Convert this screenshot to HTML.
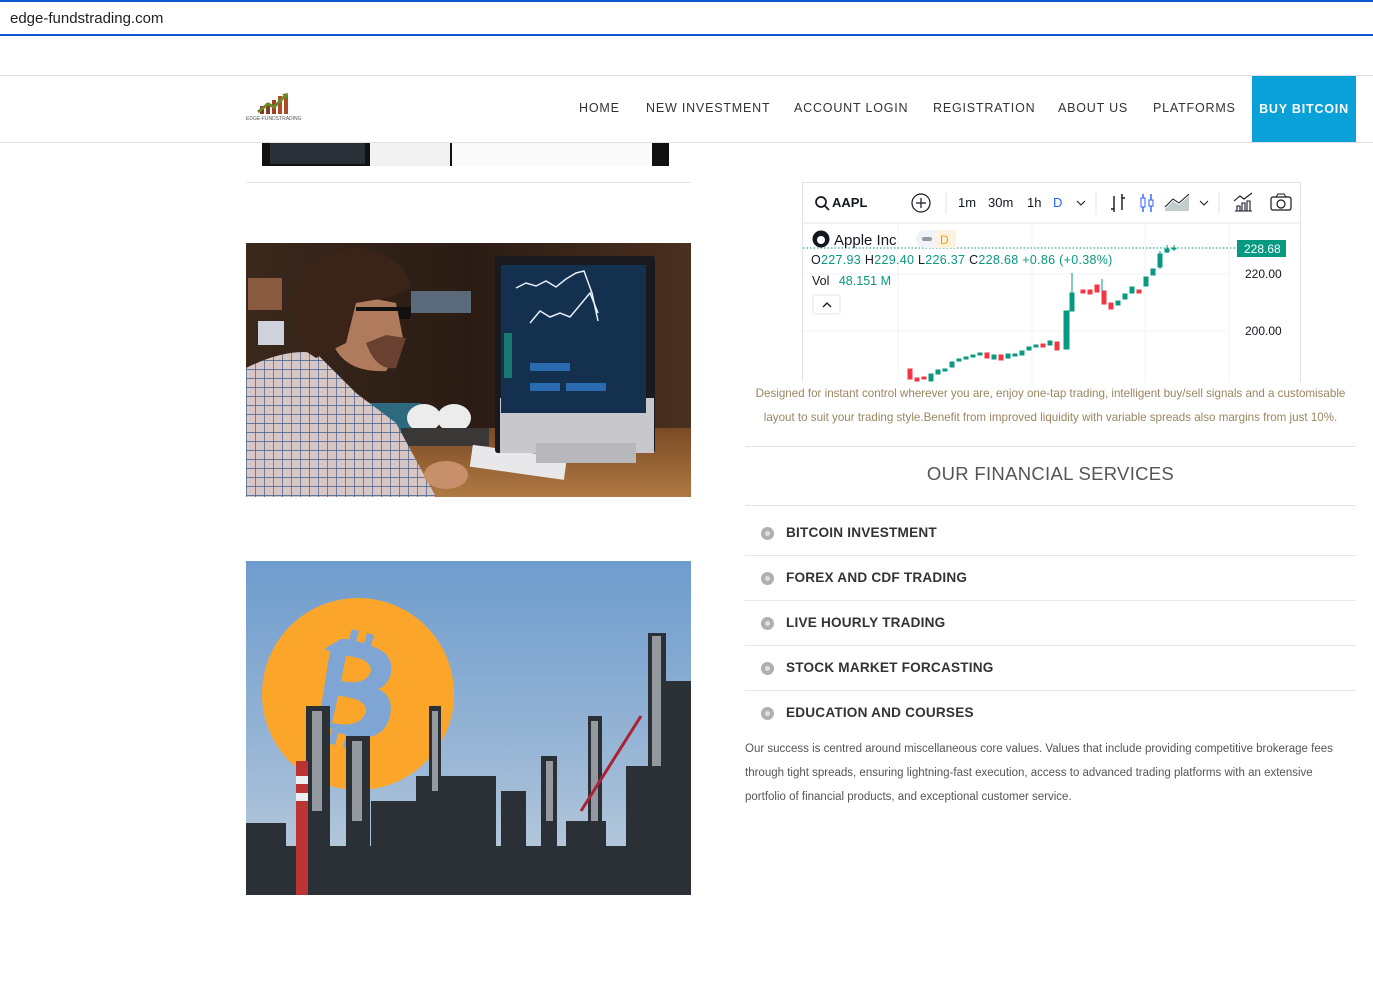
<!DOCTYPE html>
<html><head><meta charset="utf-8">
<style>
*{margin:0;padding:0;box-sizing:border-box}
body{width:1373px;height:983px;background:#fff;font-family:"Liberation Sans",sans-serif;position:relative;overflow:hidden}
.abs{position:absolute}
.url{left:0;top:0;width:1373px;height:36px;border-top:2px solid #0b57d0;border-bottom:2px solid #0b57d0;font-size:15px;color:#1f1f1f;padding:8px 0 0 10px}
.hdr{left:0;top:75px;width:1373px;height:68px;border-top:1px solid #e2e2e2;border-bottom:1px solid #e2e2e2;background:#fff;z-index:2}
.nav{font-size:12.5px;letter-spacing:.8px;color:#333;top:101px;z-index:3}
.buy{left:1252px;top:76px;width:104px;height:66px;background:#0aa0d8;color:#fff;font-weight:bold;font-size:12.5px;letter-spacing:.8px;line-height:66px;text-align:center;z-index:3}
.hr{height:1px;background:#e4e4e4}
.svc{left:745px;width:611px;height:45px;border-bottom:1px solid #e6e6e6}
.svc span.dot{position:absolute;left:16px;top:16px;width:13px;height:13px;border-radius:50%;background:#b0b0b0}
.svc span.dot:after{content:"";position:absolute;left:4px;top:4px;width:5px;height:5px;border-radius:50%;background:#e0e0e0}
.svc b{position:absolute;left:41px;top:14px;font-size:13.6px;color:#333;letter-spacing:.2px}
</style></head><body>
<div class="abs url">edge-fundstrading.com</div>

<div class="abs hdr"></div>
<svg class="abs" style="left:246px;top:92px;z-index:3" width="58" height="30" viewBox="0 0 58 30">
<rect x="14" y="14" width="4" height="8" fill="#8a3a20"/><rect x="20" y="11" width="4" height="11" fill="#8a3a20"/><rect x="26" y="8" width="4" height="14" fill="#a04024"/><rect x="32" y="4" width="4" height="18" fill="#b04a28"/><rect x="38" y="3" width="4" height="19" fill="#b04a28"/>
<path d="M12 20 L22 12 L28 15 L40 3" stroke="#6a8a2a" stroke-width="3" fill="none"/><path d="M36 2 L42 1 L41 7 Z" fill="#6a8a2a"/>
<text x="0" y="28" font-size="5" fill="#555" font-family="Liberation Sans">EDGE-FUNDSTRADING</text></svg>
<div class="abs nav" style="left:579px">HOME</div>
<div class="abs nav" style="left:646px">NEW INVESTMENT</div>
<div class="abs nav" style="left:794px">ACCOUNT LOGIN</div>
<div class="abs nav" style="left:933px">REGISTRATION</div>
<div class="abs nav" style="left:1058px">ABOUT US</div>
<div class="abs nav" style="left:1153px">PLATFORMS</div>
<div class="abs buy">BUY BITCOIN</div>

<div class="abs" style="left:262px;top:142px;width:407px;height:24px;background:#111">
<div class="abs" style="left:8px;top:0;width:95px;height:22px;background:#2a3038"></div>
<div class="abs" style="left:108px;top:0;width:80px;height:24px;background:#f2f2f2"></div>
<div class="abs" style="left:190px;top:0;width:200px;height:24px;background:#fafafa"></div>
</div>
<div class="abs hr" style="left:246px;top:182px;width:445px"></div>

<svg class="abs" style="left:246px;top:243px" width="445" height="254" viewBox="0 0 445 254">
<defs><linearGradient id="bg1" x1="0" y1="0" x2="1" y2="0"><stop offset="0" stop-color="#3a281c"/><stop offset=".5" stop-color="#2a1c14"/><stop offset="1" stop-color="#4a3020"/></linearGradient>
<linearGradient id="desk" x1="0" y1="0" x2="0" y2="1"><stop offset="0" stop-color="#7a4a24"/><stop offset="1" stop-color="#b07a44"/></linearGradient>
<pattern id="chk" width="9" height="9" patternUnits="userSpaceOnUse"><rect width="9" height="9" fill="#d8c6c4"/><path d="M0 0H9M0 0V9" stroke="#3f5f8f" stroke-width="1.4"/></pattern></defs>
<rect width="445" height="254" fill="url(#bg1)"/>
<rect x="2" y="35" width="34" height="32" fill="#8a5a40"/><rect x="12" y="78" width="26" height="24" fill="#cfd2dc"/>
<rect x="165" y="48" width="60" height="22" fill="#5a6a7a"/>
<rect x="150" y="185" width="295" height="69" fill="url(#desk)"/>
<rect x="120" y="160" width="55" height="30" fill="#2d6a80"/>
<ellipse cx="178" cy="175" rx="17" ry="14" fill="#ececec"/><ellipse cx="208" cy="175" rx="17" ry="14" fill="#ececec"/>
<rect x="155" y="185" width="88" height="18" fill="#3a3836"/>
<rect x="225" y="208" width="95" height="22" fill="#e8e8ea" transform="rotate(8 270 218)"/>
<rect x="249" y="13" width="160" height="197" rx="3" fill="#1a1a1e"/>
<rect x="254" y="155" width="154" height="55" fill="#c8c8cc"/>
<rect x="255" y="22" width="145" height="148" fill="#14304f"/>
<polyline points="270,45 280,40 290,43 300,38 310,44 320,36 330,30 338,28 346,50 352,78" fill="none" stroke="#e6eef8" stroke-width="1.5"/>
<polyline points="284,80 294,68 304,74 314,70 324,74 334,62 344,50 352,70" fill="none" stroke="#e6eef8" stroke-width="1.5"/>
<rect x="284" y="120" width="40" height="8" fill="#2a6ab0"/><rect x="320" y="140" width="40" height="8" fill="#2a6ab0"/><rect x="284" y="140" width="30" height="8" fill="#2a6ab0"/>
<rect x="258" y="90" width="8" height="45" fill="#1aaa8a" opacity=".6"/>
<rect x="290" y="200" width="100" height="20" fill="#b8b8bc"/>
<path d="M0 125 Q40 105 70 110 L110 150 L150 180 L190 254 L0 254Z" fill="url(#chk)"/>
<path d="M85 95 Q95 130 140 128 L158 100 L150 60 L100 50Z" fill="#b07a5c"/>
<path d="M120 100 Q130 128 150 125 L160 95 L140 92Z" fill="#6a4030"/>
<path d="M45 60 Q55 5 115 5 Q160 12 165 45 L140 55 L110 60 L100 100 L70 115 L55 105Z" fill="#3a2418"/>
<rect x="110" y="64" width="55" height="4" fill="#111"/><rect x="153" y="64" width="12" height="12" rx="3" fill="#111"/>
<ellipse cx="200" cy="232" rx="22" ry="14" fill="#c8906a"/>
</svg>

<svg class="abs" style="left:246px;top:561px" width="445" height="334" viewBox="0 0 445 334">
<defs><linearGradient id="sky" x1="0" y1="0" x2="0" y2="1"><stop offset="0" stop-color="#6e9ccd"/><stop offset=".6" stop-color="#9ab7d6"/><stop offset="1" stop-color="#c0cfdc"/></linearGradient></defs>
<rect width="445" height="334" fill="url(#sky)"/>
<circle cx="112" cy="133" r="96" fill="#fba62a"/>
<path d="M95 78 L103 78 L106 68 L113 70 L110 80 L118 82 L121 72 L128 74 L125 85 Q148 92 145 112 Q142 124 132 128 Q148 135 144 155 Q138 180 108 176 L104 188 L97 186 L100 174 L92 172 L89 184 L82 182 L86 168 L72 165 L84 90 L78 88Z" fill="#7fa5d4"/>
<path d="M100 95 L95 120 Q120 125 125 110 Q125 97 100 95Z M92 135 L86 162 Q115 168 120 150 Q120 137 92 135Z" fill="#fba62a"/>
<g fill="#2a3036">
<rect x="0" y="285" width="445" height="49"/>
<rect x="60" y="145" width="24" height="190"/><rect x="100" y="175" width="24" height="160"/>
<rect x="50" y="200" width="12" height="134" fill="#b33"/><rect x="50" y="215" width="12" height="8" fill="#eee"/><rect x="50" y="232" width="12" height="8" fill="#eee"/>
<rect x="183" y="145" width="12" height="190"/><rect x="170" y="215" width="80" height="120"/>
<rect x="255" y="230" width="25" height="105"/><rect x="295" y="195" width="16" height="140"/>
<rect x="342" y="155" width="14" height="180"/><rect x="380" y="205" width="25" height="130"/>
<rect x="402" y="72" width="18" height="262"/><rect x="418" y="120" width="27" height="214"/>
<rect x="0" y="262" width="40" height="72"/><rect x="125" y="240" width="45" height="94"/><rect x="320" y="260" width="40" height="74"/>
</g>
<g fill="#aeb4ba" opacity=".8"><rect x="66" y="150" width="10" height="100"/><rect x="106" y="180" width="10" height="80"/><rect x="186" y="150" width="6" height="80"/><rect x="345" y="160" width="7" height="100"/><rect x="406" y="75" width="9" height="130"/><rect x="300" y="200" width="7" height="60"/></g>
<path d="M335 250 L395 155" stroke="#a23" stroke-width="3"/>
</svg>

<div class="abs" style="left:802px;top:182px;width:499px;height:200px;border:1px solid #e0e3eb;border-bottom:none;overflow:hidden">
<svg width="499" height="200" viewBox="802 182 499 200" style="display:block">
<line x1="802" y1="222" x2="1301" y2="222" stroke="#e0e3eb"/>
<line x1="897" y1="222" x2="897" y2="382" stroke="#f0f3fa"/><line x1="1031" y1="222" x2="1031" y2="382" stroke="#f0f3fa"/><line x1="1144" y1="222" x2="1144" y2="382" stroke="#f0f3fa"/><line x1="1228" y1="222" x2="1228" y2="382" stroke="#f0f3fa"/>
<line x1="802" y1="273" x2="1228" y2="273" stroke="#f0f3fa"/><line x1="802" y1="330" x2="1228" y2="330" stroke="#f0f3fa"/>
<line x1="802" y1="247" x2="1235" y2="247" stroke="#089981" stroke-dasharray="1.5 2"/>
<g font-family="Liberation Sans" font-size="13">
<circle cx="820" cy="201" r="5" fill="none" stroke="#131722" stroke-width="1.7"/><line x1="824" y1="205" x2="828" y2="209" stroke="#131722" stroke-width="1.7"/>
<text x="831" y="206" font-weight="bold" fill="#131722">AAPL</text>
<circle cx="920" cy="202" r="9" fill="none" stroke="#131722" stroke-width="1.2"/><path d="M915 202H925M920 197V207" stroke="#131722" stroke-width="1.2"/>
<line x1="945" y1="191" x2="945" y2="213" stroke="#e0e3eb"/>
<text x="957" y="206" fill="#131722">1m</text><text x="987" y="206" fill="#131722">30m</text><text x="1026" y="206" fill="#131722">1h</text><text x="1052" y="206" fill="#2962ff">D</text>
<path d="M1076 200l4 4 4-4" fill="none" stroke="#131722"/>
<line x1="1095" y1="191" x2="1095" y2="213" stroke="#e0e3eb"/>
<path d="M1113 195v16M1110 208h3M1121 193v16M1121 197h3" stroke="#131722" stroke-width="1.4" fill="none"/>
<path d="M1142 193v18M1150 193v18" stroke="#2962ff" stroke-width="1.4"/><rect x="1140" y="197" width="4" height="9" fill="#fff" stroke="#2962ff"/><rect x="1148" y="199" width="4" height="6" fill="#fff" stroke="#2962ff"/>
<path d="M1164 208 L1172 200 L1178 204 L1188 195 V210 H1164Z" fill="#9aa" opacity=".6"/><path d="M1164 206 L1172 198 L1178 202 L1188 193" stroke="#131722" fill="none"/>
<path d="M1199 200l4 4 4-4" fill="none" stroke="#131722"/>
<line x1="1218" y1="191" x2="1218" y2="213" stroke="#e0e3eb"/>
<path d="M1234 210h17M1236 210v-5h3v5M1241 210v-8h3v8M1246 210v-10h3v10M1233 200l6-5 4 3 8-6" stroke="#131722" fill="none" stroke-width="1.1"/>
<rect x="1270" y="196" width="20" height="13" rx="2" fill="none" stroke="#131722" stroke-width="1.2"/><circle cx="1280" cy="203" r="4" fill="none" stroke="#131722" stroke-width="1.2"/><path d="M1275 196l2-3h6l2 3" fill="none" stroke="#131722"/>
<circle cx="820" cy="238" r="8.5" fill="#131722"/><circle cx="820" cy="239" r="4" fill="#fff"/>
<text x="833" y="244" font-size="15" fill="#131722">Apple Inc</text>
<rect x="915" y="229" width="40" height="18" rx="9" fill="#f0f3fa"/><rect x="935" y="229" width="20" height="18" fill="#fff3e0"/><rect x="921" y="236" width="10" height="4" rx="2" fill="#9598a1"/><text x="939" y="243" fill="#ff9800" font-size="12">D</text>
<text x="810" y="263" font-size="12.5" fill="#131722" letter-spacing=".3">O<tspan fill="#089981">227.93</tspan> H<tspan fill="#089981">229.40</tspan> L<tspan fill="#089981">226.37</tspan> C<tspan fill="#089981">228.68</tspan> <tspan fill="#089981">+0.86 (+0.38%)</tspan></text>
<text x="811" y="284" font-size="12.5" fill="#131722">Vol <tspan dx="6" fill="#089981">48.151 M</tspan></text>
<rect x="812" y="294" width="27" height="19" rx="2" fill="#fff" stroke="#e0e3eb"/><path d="M822 306l4-4 4 4" fill="none" stroke="#131722" stroke-width="1.3"/>
<rect x="1236" y="239" width="49" height="17" fill="#089981"/><text x="1243" y="252" fill="#fff" font-size="12">228.68</text>
<text x="1244" y="277" fill="#131722" font-size="12">220.00</text><text x="1244" y="334" fill="#131722" font-size="12">200.00</text>
</g>
<g>
<g fill="#f23645" stroke="#f23645"><rect x="907" y="368" width="4" height="10"/><rect x="914" y="377" width="4" height="3"/><rect x="921" y="376" width="4" height="2"/><rect x="984" y="352" width="4" height="5"/><rect x="998" y="354" width="4" height="5"/><rect x="1040" y="343" width="4" height="3"/><rect x="1054" y="341" width="4" height="8"/><rect x="1080" y="289" width="4" height="3"/><rect x="1087" y="289" width="4" height="4"/><rect x="1094" y="284" width="4" height="7"/><rect x="1101" y="290" width="4" height="13"/><rect x="1108" y="302" width="4" height="6"/><rect x="1136" y="289" width="4" height="3"/></g>
<g fill="#089981" stroke="#089981"><rect x="928" y="373" width="4" height="7"/><rect x="935" y="369" width="4" height="4"/><rect x="942" y="368" width="4" height="2"/><rect x="949" y="361" width="4" height="5"/><rect x="956" y="358" width="4" height="2"/><rect x="963" y="356" width="4" height="2"/><rect x="970" y="354" width="4" height="2"/><rect x="977" y="352" width="4" height="2"/><rect x="991" y="354" width="4" height="4"/><rect x="1005" y="353" width="4" height="4"/><rect x="1012" y="353" width="4" height="2"/><rect x="1019" y="350" width="4" height="4"/><rect x="1026" y="346" width="4" height="3"/><rect x="1033" y="344" width="4" height="2"/><rect x="1047" y="340" width="4" height="4"/><rect x="1063" y="310" width="5" height="38"/><rect x="1069" y="292" width="4" height="18"/><rect x="1115" y="300" width="4" height="4"/><rect x="1122" y="293" width="4" height="5"/><rect x="1129" y="286" width="4" height="6"/><rect x="1143" y="276" width="4" height="9"/><rect x="1150" y="268" width="4" height="6"/><rect x="1157" y="253" width="4" height="13"/><rect x="1164" y="248" width="4" height="3"/><rect x="1171" y="247" width="4" height="1"/></g>
<path d="M1071 272v20M1101 278v12M1159 250v18M1166 244v8M1173 244v6" stroke="#089981"/>
</g>
</svg></div>

<div class="abs" style="left:745px;top:382px;width:611px;text-align:center;font-size:11.6px;line-height:24px;color:#9a8660">Designed for instant control wherever you are, enjoy one-tap trading, intelligent buy/sell signals and a customisable layout to suit your trading style.Benefit from improved liquidity with variable spreads also margins from just 10%.</div>
<div class="abs hr" style="left:745px;top:446px;width:611px"></div>
<div class="abs" style="left:745px;top:463px;width:611px;text-align:center;font-size:18.5px;color:#555;letter-spacing:.3px">OUR FINANCIAL SERVICES</div>
<div class="abs hr" style="left:745px;top:505px;width:611px"></div>
<div class="abs svc" style="top:511px"><span class="dot"></span><b>BITCOIN INVESTMENT</b></div>
<div class="abs svc" style="top:556px"><span class="dot"></span><b>FOREX AND CDF TRADING</b></div>
<div class="abs svc" style="top:601px"><span class="dot"></span><b>LIVE HOURLY TRADING</b></div>
<div class="abs svc" style="top:646px"><span class="dot"></span><b>STOCK MARKET FORCASTING</b></div>
<div class="abs svc" style="top:691px;border-bottom:none"><span class="dot"></span><b>EDUCATION AND COURSES</b></div>
<div class="abs" style="left:745px;top:737px;width:600px;font-size:11.5px;line-height:24px;color:#555">Our success is centred around miscellaneous core values. Values that include providing competitive brokerage fees through tight spreads, ensuring lightning-fast execution, access to advanced trading platforms with an extensive portfolio of financial products, and exceptional customer service.</div>
</body></html>
